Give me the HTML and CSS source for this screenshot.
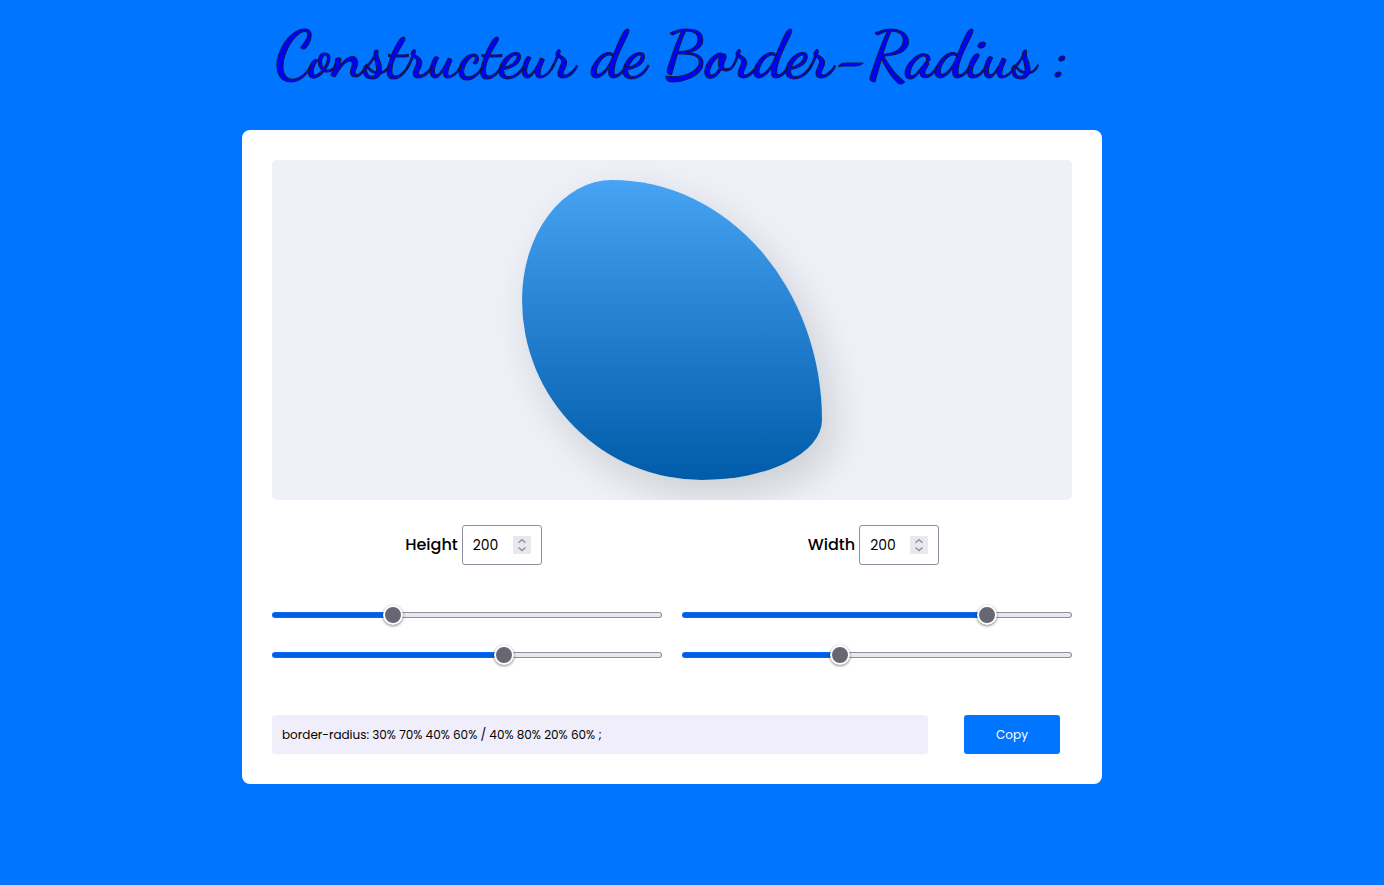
FILE: index.html
```html
<!DOCTYPE html>
<html lang="fr">
<head>
<meta charset="utf-8">
<meta name="viewport" content="width=device-width, initial-scale=1">
<title>Constructeur de Border-Radius</title>
<link rel="stylesheet" href="styles.css">
</head>
<body>
<main class="page">
  <h1 class="title">Constructeur de Border-Radius :</h1>
  <section class="card">
    <div class="preview"><div class="shape"></div></div>
    <div class="sizes">
      <div class="size">
        <label for="height">Height</label>
        <span class="number">
          <input id="height" type="number" value="200">
          <svg class="spinner" viewBox="0 0 18 18" aria-hidden="true"><path d="M5.5 6.8 9 3.8l3.5 3M5.5 11.5l3.5 3 3.5-3"/></svg>
        </span>
      </div>
      <div class="size">
        <label for="width">Width</label>
        <span class="number">
          <input id="width" type="number" value="200">
          <svg class="spinner" viewBox="0 0 18 18" aria-hidden="true"><path d="M5.5 6.8 9 3.8l3.5 3M5.5 11.5l3.5 3 3.5-3"/></svg>
        </span>
      </div>
    </div>
    <div class="sliders">
      <input class="slider" type="range" aria-label="Top" min="0" max="100" value="30" style="--value:.3">
      <input class="slider" type="range" aria-label="Right" min="0" max="100" value="80" style="--value:.8">
      <input class="slider" type="range" aria-label="Left" min="0" max="100" value="60" style="--value:.6">
      <input class="slider" type="range" aria-label="Bottom" min="0" max="100" value="40" style="--value:.4">
    </div>
    <div class="result">
      <input class="code" type="text" readonly aria-label="CSS" value="border-radius: 30% 70% 40% 60% / 40% 80% 20% 60% ;">
      <button class="copy" type="button">Copy</button>
    </div>
  </section>
</main>
</body>
</html>
```
FILE: styles.css
```css
* {
  box-sizing: border-box;
  margin: 0;
}

body {
  min-height: 100vh;
  background: #0075ff;
  color: #000;
  font-family: Poppins, Inter, "Open Sans", sans-serif;
}

.page {
  display: flex;
  flex-direction: column;
  align-items: center;
  gap: 30px;
  padding: 10px 40px 40px 0;
}

.title {
  font: 600 66px/90px "Dancing Script", "Liberation Serif", cursive;
  color: #00f;
  text-align: center;
  -webkit-text-stroke: 1px #151540;
}

.card {
  width: 100%;
  max-width: 860px;
  padding: 30px;
  background: #fff;
  border-radius: 8px;
}

.preview {
  display: grid;
  place-items: center;
  padding: 20px;
  background: #eef1f7;
  border-radius: 5px;
  overflow: hidden;
}

.shape {
  width: 300px;
  height: 300px;
  background: linear-gradient(#47a3f3, #005ba9);
  border-radius: 30% 70% 40% 60% / 40% 80% 20% 60%;
  box-shadow: 10px 15px 40px rgba(0, 0, 0, 0.15);
}

.sizes {
  display: grid;
  grid-template-columns: 1fr 1fr;
  padding: 25px 0 40px;
}

.size {
  display: flex;
  justify-content: center;
  align-items: center;
  gap: 4px;
  padding-left: 3px;
  font-size: 16px;
  line-height: 24px;
  font-weight: 500;
}

.number {
  display: grid;
  align-items: center;
}

.number input {
  grid-area: 1 / 1;
  width: 80px;
  height: 40px;
  padding: 0 10px;
  border: 1px solid #8f8f9d;
  border-radius: 3px;
  background: #fff;
  color: #000;
  font: 400 14px/20px Poppins, Inter, sans-serif;
  appearance: textfield;
}

.spinner {
  grid-area: 1 / 1;
  justify-self: end;
  width: 18px;
  height: 18px;
  margin-right: 11px;
  background: #e9e9ed;
  fill: none;
  stroke: #8f8f9d;
  stroke-width: 1.5;
  pointer-events: none;
}

.sliders {
  display: grid;
  grid-template-columns: 1fr 1fr;
  gap: 20px;
  padding-bottom: 50px;
}

.slider {
  appearance: none;
  width: 100%;
  height: 20px;
  background: none;
}

.slider::-webkit-slider-runnable-track {
  --fill: calc(10px + (100% - 20px) * var(--value));
  height: 6px;
  border: 1px solid transparent;
  border-radius: 3px;
  background:
    linear-gradient(to right, #0060df var(--fill), #e9e9ed var(--fill)) padding-box,
    linear-gradient(to right, #0a69f5 var(--fill), #8f8f9d var(--fill)) border-box;
}

.slider::-webkit-slider-thumb {
  appearance: none;
  width: 20px;
  height: 20px;
  margin-top: -8px;
  border: 2px solid #fff;
  border-radius: 50%;
  background: #676774;
  box-shadow: 0 1px 3px rgba(0, 0, 0, 0.5);
}

.result {
  display: flex;
  justify-content: space-between;
}

.code {
  width: 82%;
  height: 39px;
  padding: 0 10px;
  border: 0;
  border-radius: 3px;
  background: #f0eefa;
  color: #000;
  font: 400 12px/20px Poppins, Inter, sans-serif;
}

.copy {
  width: 12%;
  margin-right: 12px;
  border: 0;
  border-radius: 3px;
  background: #0075ff;
  color: #fff;
  font: 400 12px/20px Poppins, Inter, sans-serif;
}
```
